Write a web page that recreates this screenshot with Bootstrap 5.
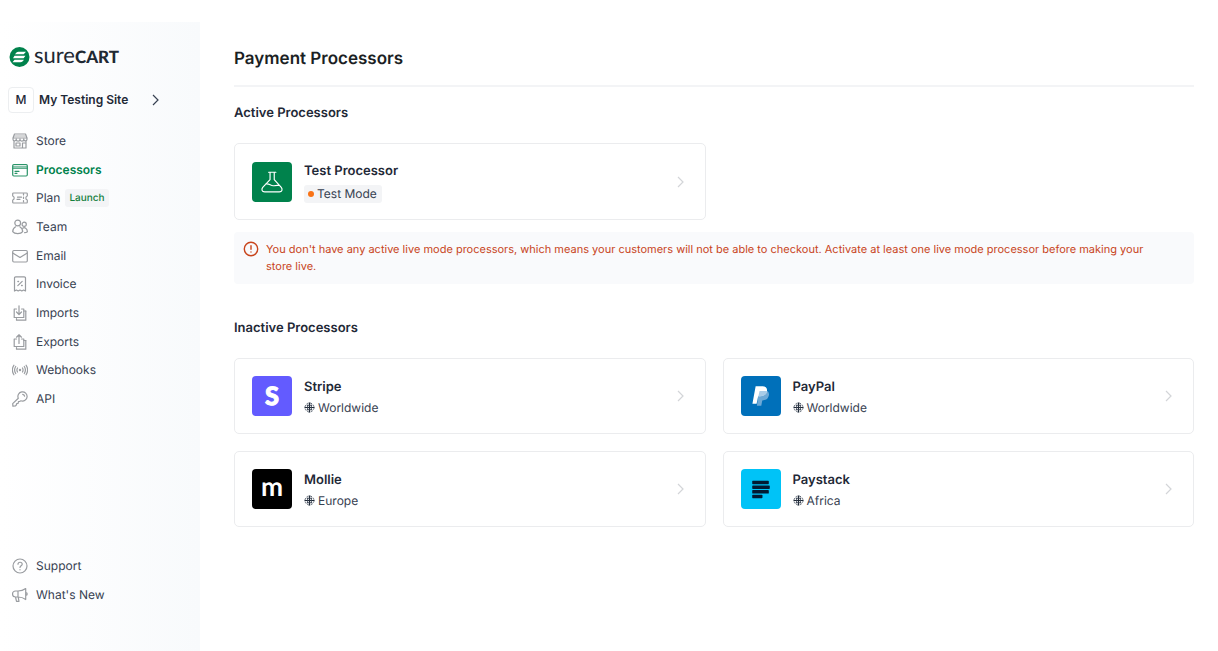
<!DOCTYPE html>
<html lang="en">
<head>
<meta charset="utf-8">
<meta name="viewport" content="width=device-width, initial-scale=1">
<title>Payment Processors – SureCart</title>
<link rel="stylesheet" href="https://cdn.jsdelivr.net/npm/bootstrap@5.3.0/dist/css/bootstrap.min.css">
<style>
  body { font-family: Inter, "Liberation Sans", sans-serif; font-size: 12px; line-height: 18px; color: #374151; text-rendering: geometricPrecision; }
  a { text-decoration: none; color: inherit; }
  svg { flex: none; }
  .ico { width: 16px; height: 16px; fill: none; stroke: #999ca0; stroke-width: 1.2; stroke-linecap: round; stroke-linejoin: round; }
  .shell { min-height: 100vh; padding-top: 22px; }
  .sidebar { width: 200px; flex: none; padding: 20px 8px 47px; background: linear-gradient(90deg, #fff, #f8fafc); }
  .brand-name { font-family: Lato, sans-serif; color: #1f2933; line-height: 26px; }
  .brand-sure { font-size: 22px; font-weight: 400; }
  .brand-cart { font-size: 17px; font-weight: 900; }
  .site-switch { margin-top: 15px; color: #1f2937; font-size: 12px; font-weight: 600; width: 151px; line-height: 18px; }
  .site-switch .chev { stroke: #374151; }
  .site-letter { width: 26px; height: 26px; border: 1px solid #eceef0; border-radius: 4px; background: #fff; margin-right: 5px; font-weight: 500; }
  .side-nav { min-height: 276px; margin-top: 19px; padding-left: 4px; }
  .side-foot { padding-left: 4px; gap: 11px; }
  .side-link { display: flex; align-items: center; gap: 8px; }
  .side-link.active { color: #00824c; font-weight: 600; }
  .side-link.active .ico { stroke: #2a9468; }
  .plan-tag { font-size: 10px; font-weight: 500; color: #15803d; background: #f3f4f6; border-radius: 3px; padding: 0 4px; margin-left: -3px; }
  .content { padding: 24px 24px 40px 34px; min-width: 0; }
  .page-title { font-size: 17px; font-weight: 600; line-height: 26px; color: #1b1f24; padding-bottom: 13px; border-bottom: 2px solid #f3f4f6; margin-bottom: 16px; }
  .group-title { font-size: 13px; font-weight: 600; line-height: 20px; color: #1f2937; margin-bottom: 20px; }
  .proc-grid { display: grid; grid-template-columns: 1fr 1fr; gap: 17px; }
  .proc { display: flex; align-items: center; gap: 12px; min-height: 76px; padding: 16px 21px 16px 17px; border: 1px solid #ebecee; border-radius: 5px; background: #fff; }
  .proc h3 { font-size: 13px; font-weight: 600; line-height: 22px; margin: 0; color: #1f2937; }
  .proc-logo { width: 40px; height: 40px; border-radius: 4px; }
  .mode-tag { background: #f3f4f6; border-radius: 3px; padding: 0 5px 0 4px; display: flex; width: fit-content; align-items: center; gap: 3px; margin-top: 3px; }
  .mode-dot { width: 6px; height: 6px; border-radius: 50%; background: #f97316; }
  .region { display: flex; align-items: center; gap: 3px; margin-top: 1px; }
  .chev { width: 7px; height: 12px; fill: none; stroke: #d3d5d8; stroke-width: 1.2; }
  .notice { margin: 12px 0 34px; padding: 9px 24px 9px 9px; gap: 7px; background: #f9fafc; border-radius: 4px; color: #c8441b; font-size: 11px; line-height: 17px; }
</style>
</head>
<body>
<svg class="d-none" aria-hidden="true">
  <symbol id="globe" viewBox="0 0 10 10"><circle cx="5" cy="5" r="4.100" fill="none" stroke="#4b5563" stroke-width=".8" stroke-dasharray="2 1.200"/><path d="M.5 5h9M5 .5v9" fill="none" stroke="#1f2937" stroke-width="1"/><path d="M2.500 3h5M2.500 7h5M3.300 2.500v5M6.700 2.500v5" fill="none" stroke="#374151" stroke-width=".8"/></symbol>
  <symbol id="chevron" viewBox="0 0 7 12"><path d="M1 1l5 5-5 5"/></symbol>
</svg>
<div class="shell d-flex">
  <aside class="sidebar d-flex flex-column">
    <a href="#" class="d-flex align-items-center">
      <svg width="22" height="22" viewBox="0 0 22 22" class="me-1"><circle cx="11.500" cy="11" r="10" fill="#00824c"/><path d="M10.500 5.800h7.500l-2.300 2.500H6.900C8 7.200 8.800 5.800 10.500 5.800zM6.500 9.700h11L15.600 12.300H5zM6.500 13.700h9.400c-.9 1.200-1.800 2.500-3.500 2.500H4.500z" fill="#fff"/></svg>
      <span class="brand-name"><span class="brand-sure">sure</span><span class="brand-cart">CART</span></span>
    </a>
    <button type="button" class="site-switch btn p-0 border-0 d-flex align-items-center">
      <span class="site-letter d-flex align-items-center justify-content-center">M</span>My Testing Site
      <svg class="chev ms-auto"><use href="#chevron"/></svg>
    </button>
    <nav class="side-nav d-flex flex-column justify-content-between">
      <a href="#" class="side-link"><svg class="ico" viewBox="0 0 16 16"><path d="M2.500 1h11l1.500 4v1.200a1.600 1.600 0 0 1-3.200 0 1.900 1.900 0 0 1-3.800 0 1.900 1.900 0 0 1-3.800 0A1.600 1.600 0 0 1 1 6.200V5zM1 5h14M2 8.500V15h12V8.500M4 10h4v3H4zM10.500 15v-5H13"/><path d="M2.500 3h11" stroke-width=".8"/></svg>Store</a>
      <a href="#" class="side-link active" aria-current="page"><svg class="ico" viewBox="0 0 16 16"><rect x=".7" y="2.500" width="14.600" height="11.500" rx="1.200"/><path d="M1 4.300h14" stroke-width=".7"/><path d="M.7 6.200h14.600M3 9.300h4M3 11.300h2"/></svg>Processors</a>
      <a href="#" class="side-link"><svg class="ico" viewBox="0 0 16 16"><path d="M1.500 3h13a.8.800 0 0 1 .8.800V6a2.100 2.100 0 0 0 0 4v2.200a.8.800 0 0 1-.8.800h-13a.8.800 0 0 1-.8-.8V10a2.100 2.100 0 0 0 0-4V3.800A.8.800 0 0 1 1.500 3zM5.500 7.200h4M5 9.300h3"/><path d="M11.500 3.500v9" stroke-dasharray="1.500 2"/></svg>Plan <span class="plan-tag">Launch</span></a>
      <a href="#" class="side-link"><svg class="ico" viewBox="0 0 16 16"><circle cx="5.700" cy="4" r="2.900"/><circle cx="12.200" cy="5.300" r="2.100"/><path d="M3.600 7.800C1.700 8.800.8 10.500.7 12.600c1 1.400 2.800 2 5 2s4-.6 5-2c-.1-2.100-1-3.800-2.900-4.800M10.700 9.200c.9-.7 2-.7 3 0 1.200.8 1.700 2 1.700 3.500-.7.600-1.600 1-2.800 1"/></svg>Team</a>
      <a href="#" class="side-link"><svg class="ico" viewBox="0 0 16 16"><rect x=".7" y="2.500" width="14.600" height="11.500" rx="1.200"/><path d="M.7 5L8 9.500 15.300 5"/></svg>Email</a>
      <a href="#" class="side-link"><svg class="ico" viewBox="0 0 16 16"><path d="M2.500 15V2a1.200 1.200 0 0 1 1.200-1.200h8.600A1.200 1.200 0 0 1 13.500 2v13l-1.900-1-1.800 1L8 14l-1.800 1-1.800-1zM5.800 9.700l4.400-4.400"/><path d="M5.900 5.500h.6M9.600 9.500h.6" stroke-width="1.400"/></svg>Invoice</a>
      <a href="#" class="side-link"><svg class="ico" viewBox="0 0 16 16"><path d="M7 .8v8.500M4.500 7L7 9.500 9.500 7M4.500 4H2.200v8.500h9.600V4H9.500M13.800 6v9.200H4.500v-1.500"/><path d="M11.800 6h2"/></svg>Imports</a>
      <a href="#" class="side-link"><svg class="ico" viewBox="0 0 16 16"><path d="M7 9.500V1M4.500 3.200L7 .8l2.500 2.400M4.500 5H2.200v7.500h9.600V5H9.500M13.800 6.500v8.700H4.500v-1.500"/><path d="M11.800 6.500h2"/></svg>Exports</a>
      <a href="#" class="side-link"><svg class="ico" viewBox="0 0 16 16"><circle cx="8" cy="8" r=".6"/><path d="M5.500 6a4 4 0 0 0 0 4M10.500 6a4 4 0 0 1 0 4M3.700 4.500a6.500 6.500 0 0 0 0 7M12.300 4.500a6.500 6.500 0 0 1 0 7M1.900 3.200a9 9 0 0 0 0 9.600M14.100 3.200a9 9 0 0 1 0 9.600"/></svg>Webhooks</a>
      <a href="#" class="side-link"><svg class="ico" viewBox="0 0 16 16"><path d="M6.300 7.300A4.600 4.600 0 1 1 9 9.800l-1.500.7-1 .2-.4 1.600-1.400.3-.4 1.400-.8.900-2.600.2-.2-2.500z"/><path d="M10.700 3.300c1 .1 1.700.8 1.900 1.900"/></svg>API</a>
    </nav>
    <div class="side-foot d-flex flex-column mt-auto">
      <a href="#" class="side-link"><svg class="ico" viewBox="0 0 16 16"><circle cx="8" cy="8" r="7"/><path d="M6 6.200c0-2.600 4.200-2.600 4.200 0C10.200 7.800 8 7.800 8 9.500M8 11.700v.1"/></svg>Support</a>
      <a href="#" class="side-link"><svg class="ico" viewBox="0 0 16 16"><path d="M6 4h-2.500a2.700 2.700 0 0 0 0 6H6c3 0 5.500.8 7.700 2.500V1.500C11.500 3.200 9 4 6 4zM6 4v6M3.500 10l1 4.300h2.500L6.200 10M13.700 5.500a1.500 1.500 0 0 1 0 3"/></svg>What's New</a>
    </div>
  </aside>
  <main class="content flex-grow-1">
    <h1 class="page-title">Payment Processors</h1>
    <section>
      <h2 class="group-title">Active Processors</h2>
      <div class="proc-grid">
        <a href="#" class="proc">
          <svg class="proc-logo" viewBox="0 0 41 41"><rect width="41" height="41" fill="#00824c"/><path d="M17 10.500h7.500M18.500 10.500v7.500l-7.500 8c-1.500 2-1 4.500 2 4.700h15c3-.2 3.500-2.700 2-4.700L22.800 18v-7.500M14 22.500c4-1 5 2.500 8.500 1.800 2-.4 3.500-.6 5-.3" fill="none" stroke="#fff" stroke-width="1.200" stroke-linecap="round" stroke-linejoin="round"/></svg>
          <div><h3>Test Processor</h3><span class="mode-tag"><i class="mode-dot"></i>Test Mode</span></div>
          <svg class="chev ms-auto"><use href="#chevron"/></svg>
        </a>
      </div>
    </section>
    <div class="notice d-flex align-items-start" role="alert">
      <svg width="16" height="16" viewBox="0 0 16 16" fill="none" stroke="#c8441b" stroke-width="1.400" stroke-linecap="round"><circle cx="8" cy="8" r="6.700"/><path d="M8 4.800v3.500M8 11v.1"/></svg>
      <span>You don't have any active live mode processors, which means your customers will not be able to checkout. Activate at least one live mode processor before making your store live.</span>
    </div>
    <section>
      <h2 class="group-title">Inactive Processors</h2>
      <div class="proc-grid">
        <a href="#" class="proc">
          <svg class="proc-logo" viewBox="0 0 41 41"><rect width="41" height="41" fill="#635bff"/><text x="20.500" y="30" text-anchor="middle" font-family="Lato" font-weight="900" font-size="26" fill="#fff" stroke="#fff">S</text></svg>
          <div><h3>Stripe</h3><span class="region"><svg width="11" height="11"><use href="#globe"/></svg>Worldwide</span></div>
          <svg class="chev ms-auto"><use href="#chevron"/></svg>
        </a>
        <a href="#" class="proc">
          <svg class="proc-logo" viewBox="0 0 41 41"><rect width="41" height="41" fill="#0070ba"/><path d="M18.500 14.500h6c3.500.4 5 3 3.800 6.300-1 3-3.300 4.200-6.500 4.200l-1 5.500h-4.500z" fill="#6ea9d6"/><path d="M15 10.500h7c3.300.2 5.200 2 4.600 5-.8 3.700-3.400 5.200-7.300 5.200h-1.700L16 28.500h-4.300z" fill="#fff"/><path d="M19 15.500h6.500c1 0 1.500.3 1.200.8-.9 3-3.400 4.400-7.400 4.400h-1.500z" fill="#a9cce8"/></svg>
          <div><h3>PayPal</h3><span class="region"><svg width="11" height="11"><use href="#globe"/></svg>Worldwide</span></div>
          <svg class="chev ms-auto"><use href="#chevron"/></svg>
        </a>
        <a href="#" class="proc">
          <svg class="proc-logo" viewBox="0 0 41 41"><rect width="41" height="41" fill="#000"/><text x="20.500" y="28" text-anchor="middle" font-family="Lato" font-weight="700" font-size="27" fill="#fff">m</text></svg>
          <div><h3>Mollie</h3><span class="region"><svg width="11" height="11"><use href="#globe"/></svg>Europe</span></div>
          <svg class="chev ms-auto"><use href="#chevron"/></svg>
        </a>
        <a href="#" class="proc">
          <svg class="proc-logo" viewBox="0 0 41 41"><rect width="41" height="41" fill="#00c3f7"/><g fill="#011b33"><rect x="11.500" y="12" width="17" height="3.600" rx=".7"/><rect x="11.500" y="16.800" width="18" height="3.600" rx=".7"/><rect x="11.500" y="21.600" width="17" height="3.600" rx=".7"/><rect x="11.500" y="26.400" width="10.500" height="3.600" rx=".7"/></g></svg>
          <div><h3>Paystack</h3><span class="region"><svg width="11" height="11"><use href="#globe"/></svg>Africa</span></div>
          <svg class="chev ms-auto"><use href="#chevron"/></svg>
        </a>
      </div>
    </section>
  </main>
</div>
<script src="https://cdn.jsdelivr.net/npm/bootstrap@5.3.0/dist/js/bootstrap.bundle.min.js"></script>
</body>
</html>
